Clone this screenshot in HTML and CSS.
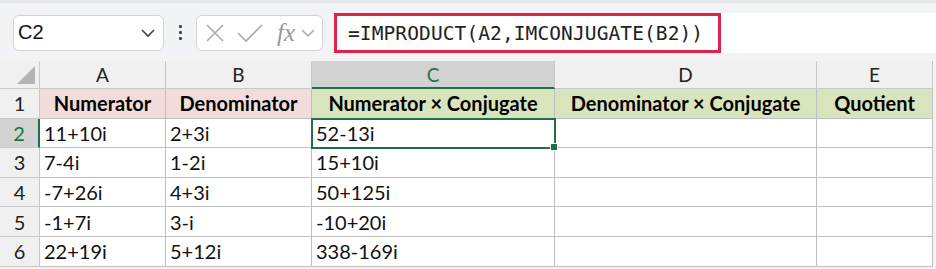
FILE: index.html
```html
<!DOCTYPE html>
<html lang="en">
<head>
  <meta charset="UTF-8">
  <title>IMPRODUCT</title>
  <link rel="stylesheet" href="styles.css">
</head>
<body>
  <div class="toolbar">
    <div class="namebox">
      <span>C2</span>
      <svg width="16" height="10" viewBox="0 0 16 10"><path d="M2 2 L8 8 L14 2" fill="none" stroke="#444" stroke-width="1.6"/></svg>
    </div>
    <div class="dots"><i></i><i></i><i></i></div>
    <div class="fxbox">
      <svg width="20" height="20" viewBox="0 0 20 20"><path d="M2 2 L18 18 M18 2 L2 18" stroke="#aaa" stroke-width="1.6"/></svg>
      <svg width="26" height="20" viewBox="0 0 26 20"><path d="M1 10 L9 18 L25 2" fill="none" stroke="#aaa" stroke-width="1.6"/></svg>
      <span class="fx">fx</span>
      <svg width="14" height="10" viewBox="0 0 14 10"><path d="M1 2 L7 8 L13 2" fill="none" stroke="#aaa" stroke-width="1.5"/></svg>
    </div>
    <div class="formulabar">
      <div class="formula">=IMPRODUCT(A2,IMCONJUGATE(B2))</div>
    </div>
  </div>

  <div class="sheet">
    <div class="corner"><div class="tri"></div></div>
    <div class="colhead">A</div>
    <div class="colhead">B</div>
    <div class="colhead active">C</div>
    <div class="colhead">D</div>
    <div class="colhead">E</div>

    <div class="rowhead">1</div>
    <div class="cell title pink">Numerator</div>
    <div class="cell title pink">Denominator</div>
    <div class="cell title green">Numerator × Conjugate</div>
    <div class="cell title green">Denominator × Conjugate</div>
    <div class="cell title green">Quotient</div>

    <div class="rowhead active">2</div>
    <div class="cell">11+10i</div>
    <div class="cell">2+3i</div>
    <div class="cell selected">52-13i<span class="handle"></span></div>
    <div class="cell"></div>
    <div class="cell"></div>

    <div class="rowhead">3</div>
    <div class="cell">7-4i</div>
    <div class="cell">1-2i</div>
    <div class="cell">15+10i</div>
    <div class="cell"></div>
    <div class="cell"></div>

    <div class="rowhead">4</div>
    <div class="cell">-7+26i</div>
    <div class="cell">4+3i</div>
    <div class="cell">50+125i</div>
    <div class="cell"></div>
    <div class="cell"></div>

    <div class="rowhead">5</div>
    <div class="cell">-1+7i</div>
    <div class="cell">3-i</div>
    <div class="cell">-10+20i</div>
    <div class="cell"></div>
    <div class="cell"></div>

    <div class="rowhead">6</div>
    <div class="cell">22+19i</div>
    <div class="cell">5+12i</div>
    <div class="cell">338-169i</div>
    <div class="cell"></div>
    <div class="cell"></div>
  </div>
</body>
</html>
```

FILE: styles.css
```css
body {
  margin: 0;
  background-color: #f3f3f3;
  font-family: Lato, "Liberation Sans", sans-serif;
  color: #111;
  overflow: hidden;
}
.toolbar {
  display: flex;
  align-items: center;
  height: 58px;
  padding: 0 0 0 13px;
  background-color: #f1f3f6;
  border-top: 3px solid #e2e4e7;
  box-sizing: border-box;
}
.namebox {
  display: flex;
  align-items: center;
  justify-content: space-between;
  width: 151px;
  height: 36px;
  margin-top: 4px;
  padding: 0 7px 0 4px;
  box-sizing: border-box;
  background-color: #fff;
  border: 1px solid #d4d4d4;
  border-radius: 6px;
  font-family: "Liberation Sans", Arial, sans-serif;
  font-size: 20px;
  color: #111;
}
.dots {
  display: flex;
  flex-direction: column;
  gap: 3px;
  width: 32px;
  align-items: center;
  margin-top: 4px;
}
.dots i {
  display: block;
  width: 3px;
  height: 3px;
  background-color: #444;
  border-radius: 1px;
}
.fxbox {
  display: flex;
  align-items: center;
  gap: 12px;
  width: 127px;
  height: 36px;
  margin-top: 4px;
  padding: 0 5px 0 8px;
  box-sizing: border-box;
  background-color: #fff;
  border: 1px solid #d4d4d4;
  border-radius: 6px;
}
.fx {
  font-family: "Liberation Serif", serif;
  font-style: italic;
  font-size: 25px;
  color: #999;
  margin-right: -6px;
  margin-left: 2px;
}
.formulabar {
  flex: 1;
  height: 40px;
  margin-left: 11px;
  margin-top: 4px;
  background-color: #fff;
}
.formula {
  width: 387px;
  height: 40px;
  box-sizing: border-box;
  border: 3px solid #e0234a;
  padding: 6px 0 0 11px;
  font-family: "DejaVu Sans Mono", monospace;
  font-size: 19.5px;
  letter-spacing: 0.1px;
  color: #222;
}
.sheet {
  display: grid;
  grid-template-columns: 40px 126px 146px 243px 262px 116px;
  grid-template-rows: 28px repeat(6, 29.6px);
  margin-top: 3px;
  background-color: #fff;
  width: 933px;
}
.corner {
  background-color: #f0f0f0;
  border-right: 1px solid #c8c8c8;
  border-bottom: 1px solid #c8c8c8;
  position: relative;
}
.tri {
  position: absolute;
  right: 4px;
  bottom: 4px;
  width: 0;
  height: 0;
  border-left: 18px solid transparent;
  border-bottom: 18px solid #b4b4b4;
}
.colhead {
  display: flex;
  align-items: center;
  justify-content: center;
  background-color: #f0f0f0;
  border-right: 1px solid #c8c8c8;
  border-bottom: 1px solid #c8c8c8;
  font-size: 19px;
  color: #222;
}
.colhead.active {
  background-color: #d2d2d2;
  color: #1e7145;
  border-bottom: 2px solid #1e7145;
}
.rowhead {
  display: flex;
  align-items: center;
  justify-content: center;
  background-color: #f0f0f0;
  border-right: 1px solid #c8c8c8;
  border-bottom: 1px solid #c8c8c8;
  font-size: 20px;
  color: #222;
}
.rowhead.active {
  background-color: #d2d2d2;
  color: #1e7145;
  border-right: 2px solid #1e7145;
}
.cell {
  display: flex;
  align-items: center;
  padding-left: 4px;
  border-right: 1px solid #bfbfbf;
  border-bottom: 1px solid #bfbfbf;
  font-size: 20px;
  color: #111;
  white-space: nowrap;
  position: relative;
}
.cell.title {
  justify-content: center;
  padding-left: 0;
  font-weight: bold;
  font-size: 20px;
  color: #000;
}
.pink {
  background-color: #f2dcdb;
}
.green {
  background-color: #d8e4bc;
}
.cell.selected {
  outline: 2px solid #1e7145;
  outline-offset: -1px;
  z-index: 1;
}
.handle {
  position: absolute;
  right: -4px;
  bottom: -4px;
  width: 6px;
  height: 6px;
  background-color: #1e7145;
  border: 1px solid #fff;
}
```
